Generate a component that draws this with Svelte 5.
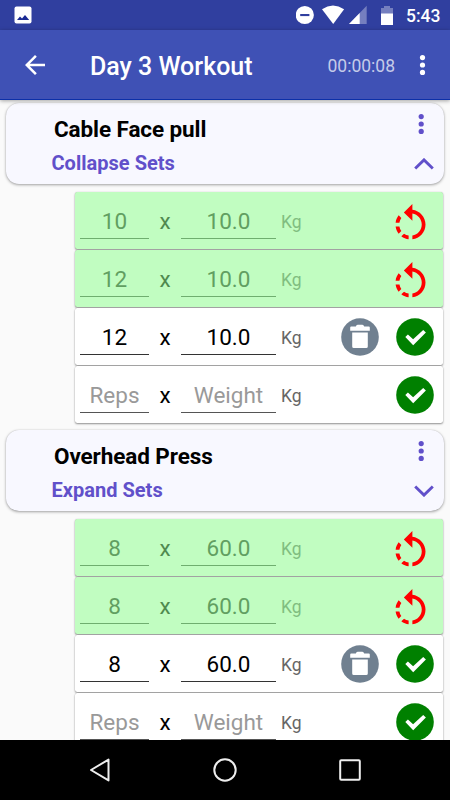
<script>
  const exercises = [
    { name: 'Cable Face pull', action: 'Collapse Sets', up: true, reps: ['10', '12', '12'], weight: '10.0' },
    { name: 'Overhead Press', action: 'Expand Sets', up: false, reps: ['8', '8', '8'], weight: '60.0' }
  ].map((e) => ({
    ...e,
    sets: [
      { reps: e.reps[0], weight: e.weight, state: 'done' },
      { reps: e.reps[1], weight: e.weight, state: 'done' },
      { reps: e.reps[2], weight: e.weight, state: 'open' },
      { reps: '', weight: '', state: 'blank' }
    ]
  }));
</script>

<div class="screen">
  <div class="status">
    <svg class="photo" width="18" height="18" viewBox="0 0 18 18">
      <rect x=".5" y=".5" width="17" height="17" rx="2" fill="#fff" />
      <path d="M3 14l3-3.4 2 2 3-3.6 4.2 5z" fill="#1a2a94" />
    </svg>
    <svg width="72" height="20" viewBox="0 0 72 20">
      <circle cx="8.8" cy="10" r="9.1" fill="#fff" />
      <rect x="4.2" y="9" width="9.2" height="2.1" fill="#303f9f" />
      <path d="M26 4.2Q37-3.2 48.1 4.2L37.2 19z" fill="#fff" />
      <path d="M70.7 .8V19H53z" fill="#757fbf" />
      <path d="M63.7 8V19H53z" fill="#fff" />
    </svg>
    <svg class="battery" width="12" height="19" viewBox="0 0 12 19">
      <path d="M0 2h3V0h6v2h3v6H0z" fill="#757fbf" />
      <path d="M0 7.5h12V19H0z" fill="#fff" />
    </svg>
    <span class="clock">5:43</span>
  </div>

  <header>
    <svg class="back" width="20" height="20" viewBox="0 0 20 20">
      <path d="M20 8.8H4.8l7-7L10 0 0 10l10 10 1.8-1.8-7-7H20z" fill="#fff" />
    </svg>
    <h1>Day 3 Workout</h1>
    <span class="timer">00:00:08</span>
    <svg class="more" width="7" height="20" viewBox="0 0 7 20" fill="#fff">
      <circle cx="3.5" cy="2.6" r="2.6" /><circle cx="3.5" cy="10" r="2.6" /><circle cx="3.5" cy="17.4" r="2.6" />
    </svg>
  </header>

  <main>
    {#each exercises as ex}
      <section>
        <div class="card">
          <div class="names">
            <h2>{ex.name}</h2>
            <p>{ex.action}</p>
          </div>
          <div class="tools">
            <svg class="dots" width="6" height="20" viewBox="0 0 6 20" fill="#6150ca">
              <circle cx="3.2" cy="2.6" r="2.6" /><circle cx="3.2" cy="10" r="2.6" /><circle cx="3.2" cy="17.4" r="2.6" />
            </svg>
            <svg class="chevron" width="20" height="12" viewBox="0 0 20 12">
              <path d={ex.up ? 'M1.2 10.5L10 1.9l8.8 8.6' : 'M1.2 1.5L10 10.1l8.8-8.6'} fill="none" stroke="#6150ca" stroke-width="2.9" />
            </svg>
          </div>
        </div>
        <div class="sets">
          {#each ex.sets as set}
            <div class="set {set.state}">
              <span class="field reps">{set.reps || 'Reps'}</span>
              <span class="times">x</span>
              <span class="field weight">{set.weight || 'Weight'}</span>
              <span class="unit">Kg</span>
              <div class="actions">
                {#if set.state === 'done'}
                  <svg class="undo" width="45" height="45" viewBox="0 0 24 24" fill="#f00">
                    <path d="M7.11 8.53L5.7 7.11C4.8 8.27 4.24 9.61 4.07 11h2.02c.14-.87.49-1.72 1.02-2.47zM6.09 13H4.07c.17 1.39.72 2.73 1.62 3.89l1.41-1.42c-.52-.75-.87-1.59-1.01-2.47zm1.01 5.32c1.16.9 2.51 1.44 3.9 1.61V17.9c-.87-.15-1.71-.49-2.46-1.03L7.1 18.32zM13 4.07V1L8.45 5.55 13 10V6.09c2.84.48 5 2.94 5 5.91s-2.16 5.43-5 5.91v2.02c3.95-.49 7-3.85 7-7.93s-3.05-7.44-7-7.93z" />
                  </svg>
                {:else}
                  {#if set.state === 'open'}
                    <svg width="38" height="38" viewBox="0 0 38 38">
                      <circle cx="19" cy="19" r="18.8" fill="#708090" />
                      <path d="M9.2 9.4q0-1 1-1h4.6q.5-1.6 1.8-1.6h4.8q1.3 0 1.8 1.6h4.6q1 0 1 1v3.4H9.2zM11.2 14.4h15.6v14q0 1.6-1.6 1.6H12.8q-1.6 0-1.6-1.6z" fill="#fff" />
                    </svg>
                  {/if}
                  <svg width="38" height="38" viewBox="0 0 38 38">
                    <circle cx="19" cy="19" r="18.8" fill="#008000" />
                    <path d="M9.3 19l2.6-2.6 5.2 4.9 10.1-9.4 2.7 2.6-12.7 12.7z" fill="#fff" />
                  </svg>
                {/if}
              </div>
            </div>
          {/each}
        </div>
      </section>
    {/each}
  </main>

  <nav>
    <svg width="22" height="26" viewBox="0 0 22 26"><path d="M19.5 2.6v20.8L2 13z" /></svg>
    <svg width="26" height="26" viewBox="0 0 26 26"><circle cx="13" cy="13" r="10.7" /></svg>
    <svg width="22" height="22" viewBox="0 0 22 22"><rect x="1.2" y="1.2" width="19.6" height="19.6" rx="1" /></svg>
  </nav>
</div>

<style>
  :global(body) { margin: 0; background: #fafafa; }
  .screen {
    width: 450px; height: 800px; overflow: hidden;
    display: flex; flex-direction: column;
    font-family: Roboto, sans-serif; background: #fafafa;
  }
  svg { display: block; flex: none; }
  h1, h2, p { margin: 0; white-space: nowrap; }

  .status {
    flex: none; height: 30px; box-sizing: border-box; background: #303f9f;
    display: flex; align-items: center; padding: 0 10px 0 13.5px; color: #fff;
  }
  .photo { margin-right: auto; }
  .battery { margin: 0 13.5px 0 13px; }
  .clock { font-size: 17.5px; font-weight: 500; line-height: 30px; width: 34px; padding-top: 1px; white-space: nowrap; }

  header {
    flex: none; height: 70px; box-sizing: border-box; background: #3f51b5; color: #fff;
    display: flex; align-items: center; padding: 0 25px; z-index: 1;
    border-bottom: 1px solid #0c30a8; box-shadow: 0 1px 4px rgba(0, 0, 0, .35);
  }
  h1 { margin-left: 45px; font-size: 25px; font-weight: 500; line-height: 30px; padding-top: 4px; }
  .timer { margin-left: auto; font-size: 17.5px; color: #c5cbe9; padding-top: 2px; }
  .more { margin-left: 24px; margin-right: -1px; }

  main { flex: 1; min-height: 0; overflow: hidden; padding: 3px 7px 0 6px; }
  section { height: 327px; }
  .card {
    height: 81px; box-sizing: border-box; border-radius: 13px; background: #f8f8ff; margin-right: -1px;
    box-shadow: 0 1px 3px rgba(0, 0, 0, .35), 0 0 1px rgba(0, 0, 0, .2);
    display: flex; justify-content: space-between; padding: 0 10px 0 45px;
  }
  .names { display: flex; flex-direction: column; padding-top: 13px; }
  h2 { font-size: 22.5px; letter-spacing: -.1px; line-height: 27px; font-weight: 700; color: #000; padding-left: 3px; }
  p { font-size: 20px; letter-spacing: .02px; line-height: 24px; font-weight: 700; color: #6150ca; margin-top: 8px; padding-left: .5px; }
  .tools { display: flex; flex-direction: column; align-items: flex-end; padding-top: 11px; }
  .dots { margin-right: 10px; }
  .chevron { margin-top: 24px; }

  .sets { display: flex; flex-direction: column; gap: 1px; margin: 8px 0 0 69px; }
  .set {
    height: 57px; box-sizing: border-box; border-radius: 2.5px; background: #fff; color: #000;
    box-shadow: 0 1px 2px rgba(0, 0, 0, .42), 0 0 1px rgba(0, 0, 0, .2);
    display: flex; align-items: center; padding: 0 9px 0 5px; font-size: 22.5px;
  }
  .field {
    height: 34px; line-height: 33px; border-bottom: 1px solid #333; text-align: center; flex: none;
    box-sizing: border-box; margin-top: 3px;
  }
  .reps { width: 69px; }
  .weight { width: 95px; }
  .times { width: 32px; text-align: center; padding-top: 1px; }
  .unit { margin-left: 5px; font-size: 17.5px; color: #666; padding-top: 2px; }
  .actions { margin-left: auto; display: flex; gap: 17px; padding-top: 1px; }
  .undo { margin: 6px 1.5px 0 0; }
  .done { background: #c1fdc1; }
  .done .field { color: #619f61; border-color: #6fae6f; }
  .done .times { color: #4f8a4f; }
  .done .unit { color: #80bd80; }
  .blank .field { color: #999; border-color: #555; }

  nav {
    flex: none; height: 60px; background: #000; z-index: 1; box-sizing: border-box;
    display: flex; align-items: center; justify-content: space-between; padding: 0 89px 0 89px;
  }
  nav path, nav circle, nav rect { fill: none; stroke: #eee; stroke-width: 2; stroke-linejoin: round; }
</style>
